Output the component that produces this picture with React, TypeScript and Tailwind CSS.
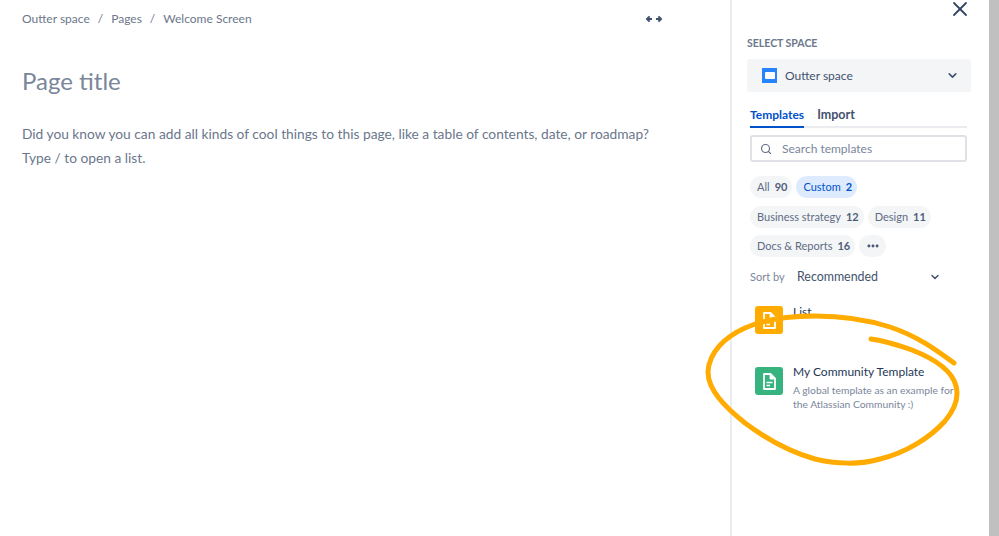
import { X, Search, ChevronDown, MoreHorizontal } from "lucide-react";

const Chip = ({ label, count, active }: { label: string; count: string; active?: boolean }) => (
  <div className={`flex h-[22px] items-center gap-[5px] rounded-full pl-[7px] pr-[5px] pt-[1px] text-[11px] ${active ? "bg-[#deebff] text-[#0052cc]" : "bg-[#f4f5f7] text-[#5e6c84]"}`}>
    <span>{label}</span>
    <span className={active ? "font-bold" : "font-bold text-[#505f79]"}>{count}</span>
  </div>
);

const DocIcon = () => (
  <svg width="13" height="17" viewBox="0 0 13 17" fill="none" stroke="white" strokeWidth="1.8" strokeLinejoin="round">
    <path d="M1 1h6.5L12 5.5V16H1z" />
    <path d="M7.5 1v4.5H12" fill="white" />
    <path d="M3.5 9.5h6M3.5 12.5h3.5" strokeWidth="1.5" />
  </svg>
);

export default function App() {
  return (
    <div className="relative flex h-[536px] w-[999px] overflow-hidden bg-white font-['Lato',sans-serif]">
      <main className="w-[730px] pl-[22px] text-[#6b778c]">
        <div className="flex items-center justify-between pt-[10px] pr-[68px]">
          <div className="flex h-[18px] items-center gap-[8px] text-[12px]">
            <span>Outter space</span>
            <span>/</span>
            <span>Pages</span>
            <span>/</span>
            <span>Welcome Screen</span>
          </div>
          <svg width="16" height="8" viewBox="0 0 16 8" fill="none" stroke="#42526e" strokeWidth="2">
            <path d="M1 4h5M3.6 1.4 1 4l2.6 2.6M15 4h-5M12.4 1.4 15 4l-2.6 2.6" />
          </svg>
        </div>
        <h1 className="mt-[36px] text-[24px] leading-[34px] text-[#7a869a]">Page title</h1>
        <p className="mt-[24px] text-[13.75px] leading-[24px]">
          Did you know you can add all kinds of cool things to this page, like a table of contents, date, or roadmap?
          <br />
          Type / to open a list.
        </p>
      </main>

      <aside className="w-[259px] border-l-2 border-[#ebecf0] pl-[15px] pr-[18px]">
        <div className="flex justify-end">
          <X className="mt-[-3px] -mr-[1px] text-[#344563]" size={24} strokeWidth={1.8} />
        </div>
        <div className="mt-[15px] text-[10.5px] font-bold leading-[14px] text-[#6b778c]">SELECT SPACE</div>
        <div className="mt-[9px] flex h-[33px] w-[224px] items-center rounded-[3px] bg-[#f4f5f7] pl-[15px] pr-[12px]">
          <div className="flex h-[15px] w-[15px] items-center justify-center bg-[#2684ff]">
            <div className="h-[7px] w-[10px] rounded-[1px] bg-white" />
          </div>
          <span className="ml-[8px] flex-1 text-[12px] text-[#42526e]">Outter space</span>
          <ChevronDown size={13} strokeWidth={3} className="text-[#42526e]" />
        </div>
        <div className="ml-[3px] mt-[13px] flex w-[217px] gap-[13px] border-b-2 border-[#ebecf0] text-[12px] font-bold leading-[20px]">
          <div className="-mb-[2px] h-[23px] border-b-2 border-[#0052cc] text-[#0052cc]">Templates</div>
          <div className="text-[12.5px] text-[#42526e]">Import</div>
        </div>
        <div className="ml-[3px] mt-[7px] flex h-[27px] w-[217px] items-center rounded-[3px] border-2 border-[#dfe1e6] pl-[8px]">
          <Search size={12} strokeWidth={2.2} className="text-[#5e6c84]" />
          <span className="ml-[10px] pt-[1px] text-[12px] text-[#7a869a]">Search templates</span>
        </div>
        <div className="ml-[3px] mt-[14px] flex w-[217px] flex-wrap gap-x-[4px] gap-y-[7.5px]">
          <Chip label="All" count="90" />
          <Chip label="Custom" count="2" active />
          <Chip label="Business strategy" count="12" />
          <Chip label="Design" count="11" />
          <Chip label="Docs & Reports" count="16" />
          <div className="flex h-[22px] w-[27px] items-center justify-center rounded-full bg-[#f4f5f7]">
            <MoreHorizontal size={14} strokeWidth={3} className="text-[#42526e]" />
          </div>
        </div>
        <div className="ml-[3px] mt-[10px] flex h-[20px] w-[191px] items-center">
          <span className="w-[47px] text-[11px] text-[#7a869a]">Sort by</span>
          <span className="flex-1 pt-[1px] text-[12.4px] text-[#42526e]">Recommended</span>
          <ChevronDown size={12} strokeWidth={3} className="text-[#42526e]" />
        </div>
        <div className="ml-[8px] mt-[19px] flex gap-[10px]">
          <div className="flex h-[28px] w-[28px] items-center justify-center rounded-[3px] bg-[#ffab00]"><DocIcon /></div>
          <div className="-mt-[3px] text-[12px] leading-[18px] text-[#253858]">List</div>
        </div>
        <div className="ml-[8px] mt-[33px] flex gap-[10px]">
          <div className="flex h-[28px] w-[28px] items-center justify-center rounded-[3px] bg-[#36b37e]"><DocIcon /></div>
          <div className="-mt-[4px] w-[170px]">
            <div className="text-[12px] leading-[18px] text-[#253858]">My Community Template</div>
            <div className="mt-[3px] text-[10.3px] leading-[13.5px] text-[#7a869a]">A global template as an example for the Atlassian Community :)</div>
          </div>
        </div>
      </aside>
      <div className="w-[10px] bg-[#c0c0c0]" />

      <svg className="pointer-events-none absolute left-0 top-0" width="999" height="536" viewBox="0 0 999 536" fill="none">
        <path
          d="M954 363C935 349 917 336 890 327C865 319 840 316 815 316C790 316 765 319 745 328C725 337 709 352 708 372C708 390 725 407 745 423C765 438 790 452 815 459C835 464 860 465 880 459C905 453 930 438 945 421C955 409 959 397 956 386C952 370 935 359 912 350C898 345 885 341 871 339"
          stroke="#ffab00"
          strokeWidth="5"
          strokeLinecap="round"
        />
      </svg>
    </div>
  );
}
